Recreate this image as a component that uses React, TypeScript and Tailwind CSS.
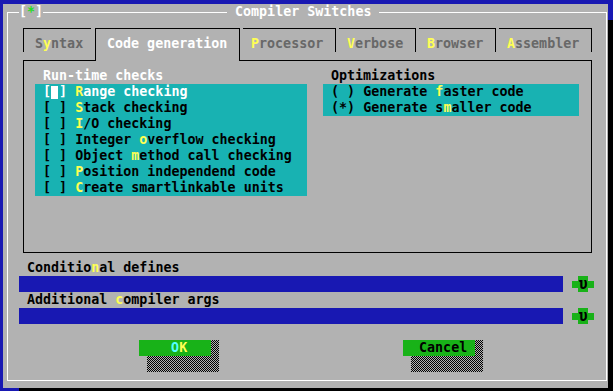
type Part = [string, string, string]

const checks: Part[] = [
  ['', 'R', 'ange checking'],
  ['', 'S', 'tack checking'],
  ['', 'I', '/O checking'],
  ['Integer ', 'o', 'verflow checking'],
  ['Object ', 'm', 'ethod call checking'],
  ['', 'P', 'osition independend code'],
  ['', 'C', 'reate smartlinkable units'],
]

const opts: { mark: string; p: Part }[] = [
  { mark: '( )', p: ['Generate ', 'f', 'aster code'] },
  { mark: '(*)', p: ['Generate s', 'm', 'aller code'] },
]

function Hot({ p }: { p: Part }) {
  return (
    <>
      {p[0]}
      <span className="text-[#ffff54]">{p[1]}</span>
      {p[2]}
    </>
  )
}

function HistoryButton() {
  return (
    <div className="ml-[9px] flex items-center">
      <div className="w-[6px] h-[7px] bg-[#18b218]" />
      <div className="w-[10px] h-4 bg-[#18b218] text-black text-center text-[15px] leading-[16px]">
        υ
      </div>
      <div className="w-[6px] h-[7px] bg-[#18b218]" />
    </div>
  )
}

const checker =
  'bg-[image:repeating-conic-gradient(#000_0%_25%,#b2b2b2_0%_50%)] bg-[length:2px_2px]'

function Button({ children, className }: { children: React.ReactNode; className?: string }) {
  return (
    <div className={`flex flex-col ${className ?? ''}`}>
      <div className="flex">
        <div className="w-[72px] h-4 bg-[#18b218] whitespace-pre">{children}</div>
        <div className={`w-[8px] h-4 ${checker}`} />
      </div>
      <div className={`ml-[8px] w-[72px] h-4 ${checker}`} />
    </div>
  )
}

export default function App() {
  return (
    <div className="w-[613px] h-[391px] overflow-hidden bg-[#1818b2] pl-[3px] pt-[4px] font-['DejaVu_Sans_Mono',monospace] text-[13.33px] leading-[16px] font-bold">
      <div className="w-[605px] h-[384px] bg-[#b2b2b2] shadow-[16px_16px_0_0_#000] pt-[8px] pl-[4px]">
        {/* window frame */}
        <div className="relative w-[600px] h-[369px] border border-white">
          <div className="absolute left-[11px] top-[-9px] w-[24px] h-4 bg-[#b2b2b2] whitespace-pre text-white">
            [<span className="text-[#22dd22]">*</span>]
          </div>
          <div className="absolute left-[219px] top-[-9px] w-[152px] h-4 bg-[#b2b2b2] whitespace-pre text-white">
            {' Compiler Switches '}
          </div>

          <div className="pt-[15px]">
            <div className="ml-[15px]">
              {/* tabs */}
              <div className="flex items-start h-[32px] text-[#686868]">
                <div className="w-[68px] h-[24px] border-l border-t border-black pl-[11px] pt-[7px]">
                  S<span className="text-[#ffff54]">y</span>ntax
                </div>
                <div className="relative z-10 ml-[4px] w-[145px] h-[33px] bg-[#b2b2b2] border-l border-t border-r border-black pl-[11px] pt-[7px] text-white">
                  Code generation
                </div>
                <div className="ml-[3px] w-[93px] h-[24px] border-t border-r border-black pl-[8px] pt-[7px]">
                  <span className="text-[#ffff54]">P</span>rocessor
                </div>
                <div className="ml-[3px] w-[77px] h-[24px] border-t border-r border-black pl-[8px] pt-[7px]">
                  <span className="text-[#ffff54]">V</span>erbose
                </div>
                <div className="ml-[3px] w-[77px] h-[24px] border-t border-r border-black pl-[8px] pt-[7px]">
                  <span className="text-[#ffff54]">B</span>rowser
                </div>
                <div className="ml-[3px] w-[93px] h-[24px] border-t border-r border-black pl-[8px] pt-[7px]">
                  <span className="text-[#ffff54]">A</span>ssembler
                </div>
              </div>

              {/* tab page */}
              <div className="w-[569px] h-[193px] border border-black pt-[7px] pl-[11px] flex gap-[16px]">
                <div className="w-[272px]">
                  <div className="h-4 pl-[8px] text-white">Run-time checks</div>
                  <div className="bg-[#18b2b2]">
                    {checks.map((c, i) =>
                      i === 0 ? (
                        <div key={i} className="h-4 whitespace-pre text-white">
                          {' ['}
                          <span className="inline-block align-top w-[8px] h-4">
                            <span className="block mt-[2px] w-[7px] h-[13px] bg-white" />
                          </span>
                          {'] '}
                          <Hot p={c} />
                        </div>
                      ) : (
                        <div key={i} className="h-4 whitespace-pre text-black">
                          {' [ ] '}
                          <Hot p={c} />
                        </div>
                      )
                    )}
                  </div>
                </div>
                <div className="w-[256px]">
                  <div className="h-4 pl-[8px] text-black">Optimizations</div>
                  <div className="bg-[#18b2b2]">
                    {opts.map((o, i) => (
                      <div key={i} className="h-4 whitespace-pre text-black">
                        {' ' + o.mark + ' '}
                        <Hot p={o.p} />
                      </div>
                    ))}
                  </div>
                </div>
              </div>
            </div>

            {/* input lines */}
            <div className="mt-[7px] text-black">
              <div className="h-4 pl-[19px] whitespace-pre">
                <Hot p={['Conditio', 'n', 'al defines']} />
              </div>
              <div className="h-4 flex ml-[11px]">
                <div className="w-[544px] h-4 bg-[#1818b2]" />
                <HistoryButton />
              </div>
              <div className="h-4 pl-[19px] whitespace-pre">
                <Hot p={['Additional ', 'c', 'ompiler args']} />
              </div>
              <div className="h-4 flex ml-[11px]">
                <div className="w-[544px] h-4 bg-[#1818b2]" />
                <HistoryButton />
              </div>
              <div className="h-4" />
              <div className="flex">
                <Button className="ml-[131px]">
                  {'    '}
                  <span className="text-[#54ffff]">O</span>
                  <span className="text-[#ffff54]">K</span>
                </Button>
                <Button className="ml-[184px]">
                  <span className="text-black">{'  Cancel'}</span>
                </Button>
              </div>
            </div>
          </div>
        </div>
      </div>
    </div>
  )
}
